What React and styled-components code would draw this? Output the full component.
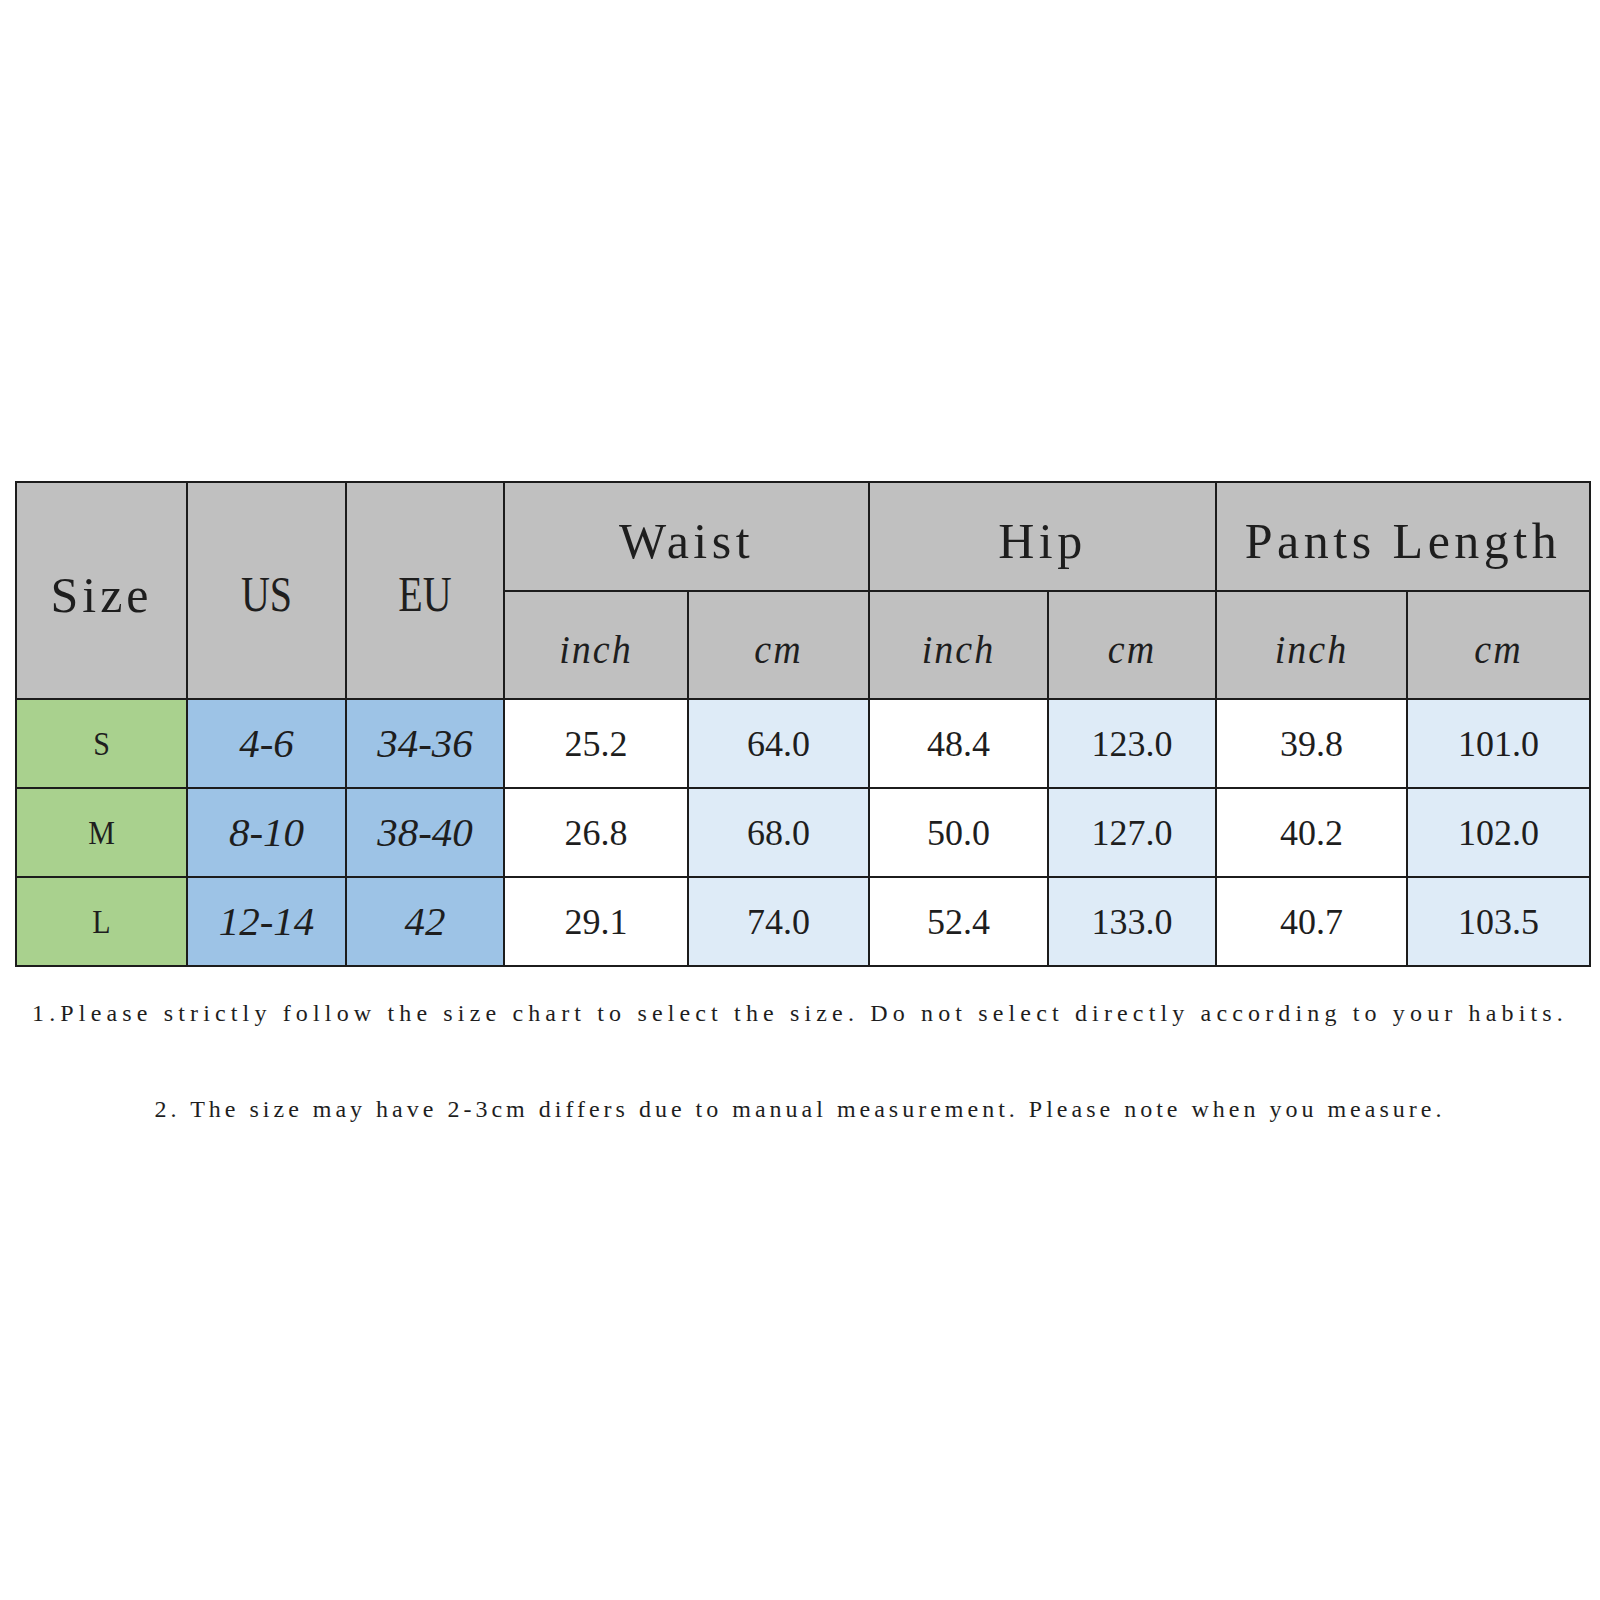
import React from "react";
import styled, { createGlobalStyle } from "styled-components";

const colors = {
  header: "#c0c0c0",
  green: "#a9d18e",
  blue: "#9dc3e6",
  paleBlue: "#deebf7",
  white: "#ffffff",
  line: "#1c1c1c",
  text: "#1e1e1e",
};

const serif = `"Liberation Serif", "Times New Roman", serif`;

const GlobalStyle = createGlobalStyle`
  html, body {
    margin: 0;
    padding: 0;
    background: #ffffff;
  }
`;

const Page = styled.div`
  width: 1600px;
  height: 1600px;
  box-sizing: border-box;
  padding-top: 481px;
  background: #ffffff;
  color: ${colors.text};
`;

const Chart = styled.table`
  table-layout: fixed;
  border-collapse: collapse;
  width: 1574px;
  margin-left: 15px;
  border: 2px solid ${colors.line};
`;

const Row = styled.tr`
  height: ${(p) => p.$h}px;
`;

const Cell = styled.td`
  border: 2px solid ${colors.line};
  background: ${(p) => p.$bg || colors.white};
  text-align: center;
  vertical-align: middle;
  padding: 0;
  font-weight: normal;
  overflow: hidden;
`;

// the chart's headings are a thin, widely spaced serif
const HeadLabel = styled.span`
  display: inline-block;
  font-family: ${serif};
  font-size: ${(p) => p.$size || 50}px;
  letter-spacing: ${(p) => p.$spacing ?? 4.5}px;
  line-height: 1;
  white-space: pre;
  transform: translateY(4px) scaleY(${(p) => p.$sy || 1});
`;

const Unit = styled.span`
  display: inline-block;
  font-family: ${serif};
  font-style: italic;
  font-size: 38px;
  letter-spacing: 2px;
  line-height: 1;
  transform: translateY(4px) scaleY(1.08);
`;

const SizeLetter = styled.span`
  display: inline-block;
  font-family: ${serif};
  font-size: 30px;
  line-height: 1;
  transform: scaleY(1.1);
`;

const Fit = styled.span`
  font-family: ${serif};
  font-style: italic;
  font-size: 41px;
  line-height: 1;
`;

const Value = styled.span`
  font-family: ${serif};
  font-size: 36px;
  line-height: 1;
`;

const Notes = styled.div`
  display: flex;
  flex-direction: column;
  align-items: center;
  gap: 66px;
  margin-top: 31px;
`;

const Note = styled.p`
  margin: 0;
  height: 30px;
  line-height: 30px;
  font-family: ${serif};
  font-size: 24px;
  letter-spacing: ${(p) => p.$spacing}px;
  white-space: pre;
`;

const widths = [171, 159, 158, 184, 181, 179, 168, 191, 183];

const groups = ["Waist", "Hip", "Pants Length"];

const rows = [
  { size: "S", us: "4-6", eu: "34-36", vals: ["25.2", "64.0", "48.4", "123.0", "39.8", "101.0"] },
  { size: "M", us: "8-10", eu: "38-40", vals: ["26.8", "68.0", "50.0", "127.0", "40.2", "102.0"] },
  { size: "L", us: "12-14", eu: "42", vals: ["29.1", "74.0", "52.4", "133.0", "40.7", "103.5"] },
];

const SizeChart = () => {
  return (
    <Chart>
      <colgroup>
        {widths.map((w, i) => (
          <col key={i} style={{ width: w }} />
        ))}
      </colgroup>
      <tbody>
        <Row $h={109}>
          <Cell as="th" rowSpan={2} $bg={colors.header}>
            <HeadLabel $spacing={4}>Size</HeadLabel>
          </Cell>
          <Cell as="th" rowSpan={2} $bg={colors.header}>
            <HeadLabel $size={40} $spacing={0} $sy={1.25}>US</HeadLabel>
          </Cell>
          <Cell as="th" rowSpan={2} $bg={colors.header}>
            <HeadLabel $size={40} $spacing={0} $sy={1.25}>EU</HeadLabel>
          </Cell>
          {groups.map((g) => (
            <Cell as="th" key={g} colSpan={2} $bg={colors.header}>
              <HeadLabel>{g}</HeadLabel>
            </Cell>
          ))}
        </Row>
        <Row $h={108}>
          {groups.map((g) => (
            <React.Fragment key={g}>
              <Cell as="th" $bg={colors.header}>
                <Unit>inch</Unit>
              </Cell>
              <Cell as="th" $bg={colors.header}>
                <Unit>cm</Unit>
              </Cell>
            </React.Fragment>
          ))}
        </Row>
        {rows.map((r) => (
          <Row key={r.size} $h={89}>
            <Cell $bg={colors.green}>
              <SizeLetter>{r.size}</SizeLetter>
            </Cell>
            <Cell $bg={colors.blue}>
              <Fit>{r.us}</Fit>
            </Cell>
            <Cell $bg={colors.blue}>
              <Fit>{r.eu}</Fit>
            </Cell>
            {r.vals.map((v, i) => (
              <Cell key={i} $bg={i % 2 ? colors.paleBlue : colors.white}>
                <Value>{v}</Value>
              </Cell>
            ))}
          </Row>
        ))}
      </tbody>
    </Chart>
  );
};

const App = () => {
  return (
    <Page>
      <GlobalStyle />
      <SizeChart />
      <Notes>
        <Note $spacing={5.15}>1.Please strictly follow the size chart to select the size. Do not select directly according to your habits.</Note>
        <Note $spacing={4}>2. The size may have 2-3cm differs due to manual measurement. Please note when you measure.</Note>
      </Notes>
    </Page>
  );
};

export default App;
